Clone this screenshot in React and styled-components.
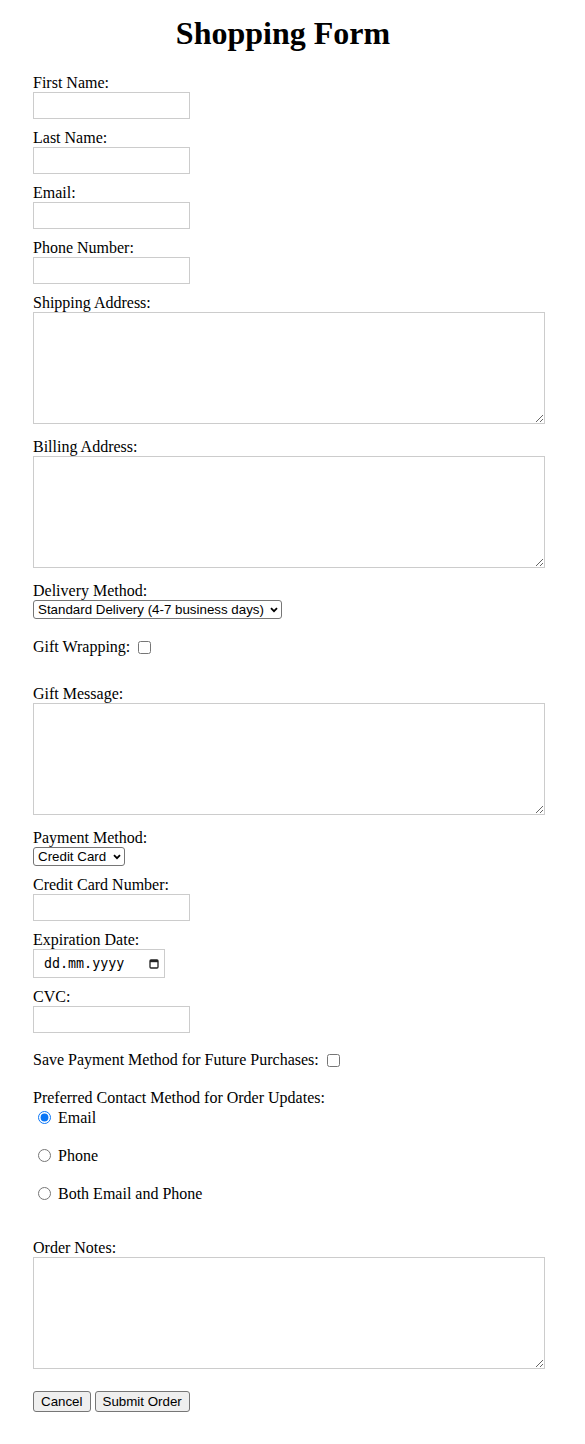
import styled, { createGlobalStyle } from 'styled-components';

const GlobalStyle = createGlobalStyle`
  body {
    margin: 0;
    background: #fff;
    color: #000;
    font-family: "Liberation Serif", "Times New Roman", serif;
    font-size: 16px;
  }
`;

const Page = styled.div`
  padding: 15px 0 33px 33px;
  width: 500px;
`;

const Title = styled.h1`
  margin: 0 0 22px;
  font-size: 32px;
  font-weight: bold;
  text-align: center;
`;

// margins collapse with the 10px below the previous group
const Group = styled.div`
  margin-top: ${(p) => p.$mt || 0}px;
  margin-bottom: ${(p) => (p.$mb === undefined ? 10 : p.$mb)}px;
`;

const FieldLabel = styled.label`
  display: block;
`;

const TextInput = styled.input`
  width: 145px;
  height: 15px;
  padding: 5px;
  border: 1px solid #ccc;
  border-radius: 0;
  font: 13.33px "Liberation Sans", Arial, sans-serif;
  vertical-align: baseline;
  outline: none;
`;

const TextArea = styled.textarea`
  width: 100%;
  height: 100px;
  padding: 5px;
  border: 1px solid #ccc;
  border-radius: 0;
  font: 13.33px "Liberation Mono", monospace;
  outline: none;
`;

const SelectWrap = styled.span`
  position: relative;
  display: inline-block;
  height: 19px;
  line-height: 0;
`;

const Select = styled.select`
  appearance: none;
  height: 19px;
  padding: 0 17px 0 4px;
  border: 1px solid #767676;
  border-radius: 3px;
  background: #fff;
  color: #000;
  font: 13.33px "Liberation Sans", Arial, sans-serif;
  outline: none;
`;

const Chevron = styled.svg`
  position: absolute;
  right: 4px;
  top: 7px;
  pointer-events: none;
`;

const CheckRow = styled.label`
  display: block;
  line-height: 20px;

  input {
    width: 13px;
    height: 13px;
    margin: 3px 3px 3px 4px;
    vertical-align: -2px;
  }
`;

const RadioList = styled.div`
  padding-top: 1px;
`;

const RadioOption = styled.label`
  display: block;
  height: 20px;
  line-height: 20px;
  margin-bottom: 18px;

  input {
    width: 13px;
    height: 13px;
    margin: 3px 3px 0 5px;
    vertical-align: -1px;
    accent-color: #0a76f6;
  }
`;

const DateBox = styled.span`
  display: inline-flex;
  align-items: center;
  box-sizing: border-box;
  width: 132px;
  height: 29px;
  padding: 0 5px 0 10px;
  border: 1px solid #ccc;
  vertical-align: top;
`;

const DateText = styled.span`
  flex: 1;
  font: 13.33px "DejaVu Sans Mono", "Liberation Mono", monospace;
  color: #000;
`;

const ButtonRow = styled.div`
  display: flex;
  gap: 4px;
  padding-top: 8px;
`;

const Button = styled.button`
  height: 21px;
  padding: 0 7px;
  border: 1px solid #767676;
  border-radius: 3px;
  background: #efefef;
  color: #000;
  font: 13.33px "Liberation Sans", Arial, sans-serif;
`;

const ChevronIcon = () => (
  <Chevron width="8" height="6" viewBox="0 0 8 6">
    <path d="M1 1.2 L4 4.2 L7 1.2" fill="none" stroke="#000" strokeWidth="1.8" />
  </Chevron>
);

const CalendarIcon = () => (
  <svg width="10" height="11" viewBox="0 0 10 11">
    <rect x="1" y="2" width="8" height="8" rx="1" fill="none" stroke="#222" strokeWidth="1.3" />
    <rect x="1" y="2" width="8" height="2.2" fill="#222" />
  </svg>
);

const TextField = ({ label, id, type = 'text' }) => (
  <Group>
    <FieldLabel htmlFor={id}>{label}</FieldLabel>
    <TextInput id={id} type={type} />
  </Group>
);

const AreaField = ({ label, id }) => (
  <Group>
    <FieldLabel htmlFor={id}>{label}</FieldLabel>
    <TextArea id={id} />
  </Group>
);

const SelectField = ({ label, id, options }) => (
  <Group>
    <FieldLabel htmlFor={id}>{label}</FieldLabel>
    <SelectWrap>
      <Select id={id}>
        {options.map((o) => (
          <option key={o}>{o}</option>
        ))}
      </Select>
      <ChevronIcon />
    </SelectWrap>
  </Group>
);

export default function App() {
  return (
    <Page>
      <GlobalStyle />
      <Title>Shopping Form</Title>
      <form onSubmit={(e) => e.preventDefault()}>
        <TextField label="First Name:" id="firstName" />
        <TextField label="Last Name:" id="lastName" />
        <TextField label="Email:" id="email" type="email" />
        <TextField label="Phone Number:" id="phone" type="tel" />
        <AreaField label="Shipping Address:" id="shipping" />
        <AreaField label="Billing Address:" id="billing" />
        <SelectField
          label="Delivery Method:"
          id="delivery"
          options={['Standard Delivery (4-7 business days)', 'Express Delivery (1-2 business days)']}
        />

        <Group $mt={18} $mb={28}>
          <CheckRow>
            Gift Wrapping: <input type="checkbox" />
          </CheckRow>
        </Group>

        <AreaField label="Gift Message:" id="giftMessage" />
        <SelectField label="Payment Method:" id="payment" options={['Credit Card', 'PayPal']} />
        <TextField label="Credit Card Number:" id="ccNumber" />

        <Group>
          <FieldLabel>Expiration Date:</FieldLabel>
          <DateBox>
            <DateText>dd.mm.yyyy</DateText>
            <CalendarIcon />
          </DateBox>
        </Group>

        <TextField label="CVC:" id="cvc" />

        <Group $mt={17} $mb={19}>
          <CheckRow>
            Save Payment Method for Future Purchases: <input type="checkbox" />
          </CheckRow>
        </Group>

        <Group $mb={35}>
          <FieldLabel as="div">Preferred Contact Method for Order Updates:</FieldLabel>
          <RadioList>
            <RadioOption>
              <input type="radio" name="contact" defaultChecked /> Email
            </RadioOption>
            <RadioOption>
              <input type="radio" name="contact" /> Phone
            </RadioOption>
            <RadioOption>
              <input type="radio" name="contact" /> Both Email and Phone
            </RadioOption>
          </RadioList>
        </Group>

        <AreaField label="Order Notes:" id="notes" />

        <ButtonRow>
          <Button type="button">Cancel</Button>
          <Button type="submit">Submit Order</Button>
        </ButtonRow>
      </form>
    </Page>
  );
}
